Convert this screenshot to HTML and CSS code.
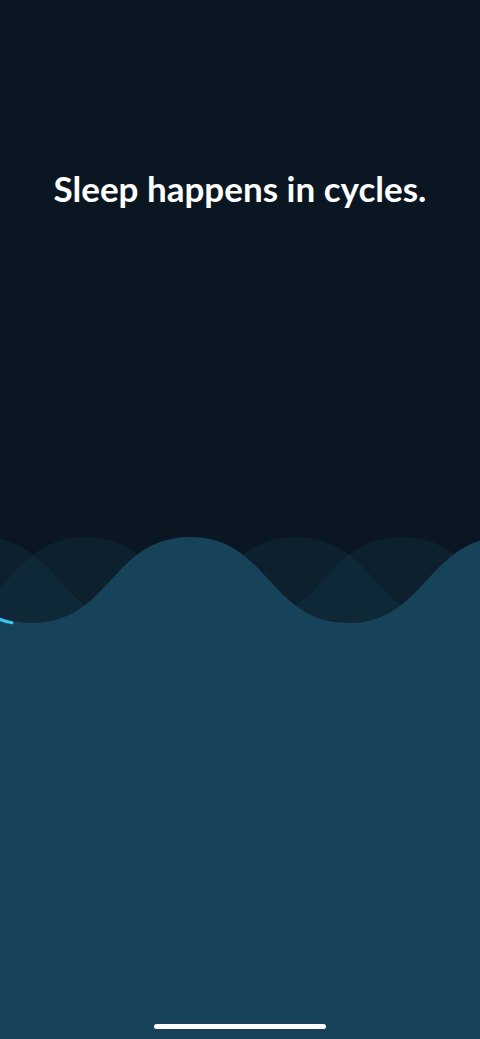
FILE: index.html
```html
<!DOCTYPE html>
<html lang="en">
<head>
<meta charset="utf-8">
<title>Sleep happens in cycles</title>
<link rel="stylesheet" href="styles.css">
</head>
<body>
<main class="screen">
  <svg class="waves" viewBox="0 0 480 1039" preserveAspectRatio="none" aria-hidden="true">
    <path class="wave-back" d="M -178 623 C -99 623 -99 537 -20 537 C 59 537 59 623 138 623 C 217 623 217 537 296 537 C 375 537 375 623 454 623 C 533 623 533 537 612 537 L 612 1039 L -178 1039 Z"/>
    <path class="wave-back" d="M -72 623 C 7 623 7 537 86 537 C 165 537 165 623 244 623 C 323 623 323 537 402 537 C 481 537 481 623 560 623 L 560 1039 L -72 1039 Z"/>
    <path class="wave-front" d="M -126 537 C -47 537 -47 623 32 623 C 111 623 111 537 190 537 C 269 537 269 623 348 623 C 427 623 427 537 506 537 L 506 1039 L -126 1039 Z"/>
    <path class="progress" d="M -2 618.6 C 3 620.4 7 621.9 12 622.8"/>
  </svg>
  <h1 class="title">Sleep happens in cycles.</h1>
  <div class="home-indicator"></div>
</main>
</body>
</html>
```
FILE: styles.css
```css
* { box-sizing: border-box; }
html, body { margin: 0; padding: 0; }
body {
  background: #0a1621;
  font-family: "Lato", "Noto Sans", sans-serif;
}
.screen {
  position: relative;
  width: 480px;
  height: 1039px;
  overflow: hidden;
  background: #0a1621;
  display: flex;
  flex-direction: column;
  align-items: center;
  padding-top: 165px;
}
.waves {
  position: absolute;
  inset: 0;
  width: 480px;
  height: 1039px;
}
.wave-back { fill: #17465d; fill-opacity: 0.22; }
.wave-front { fill: #17435a; }
.progress { fill: none; stroke: #3cc4ef; stroke-width: 3; stroke-linecap: round; }
.title {
  position: relative;
  margin: 0;
  color: #ffffff;
  font-size: 35px;
  line-height: 46px;
  font-weight: 700;
  letter-spacing: 0;
  text-align: center;
}
.home-indicator {
  position: absolute;
  left: 154px;
  bottom: 10px;
  width: 172px;
  height: 5px;
  border-radius: 3px;
  background: #ffffff;
}
```
